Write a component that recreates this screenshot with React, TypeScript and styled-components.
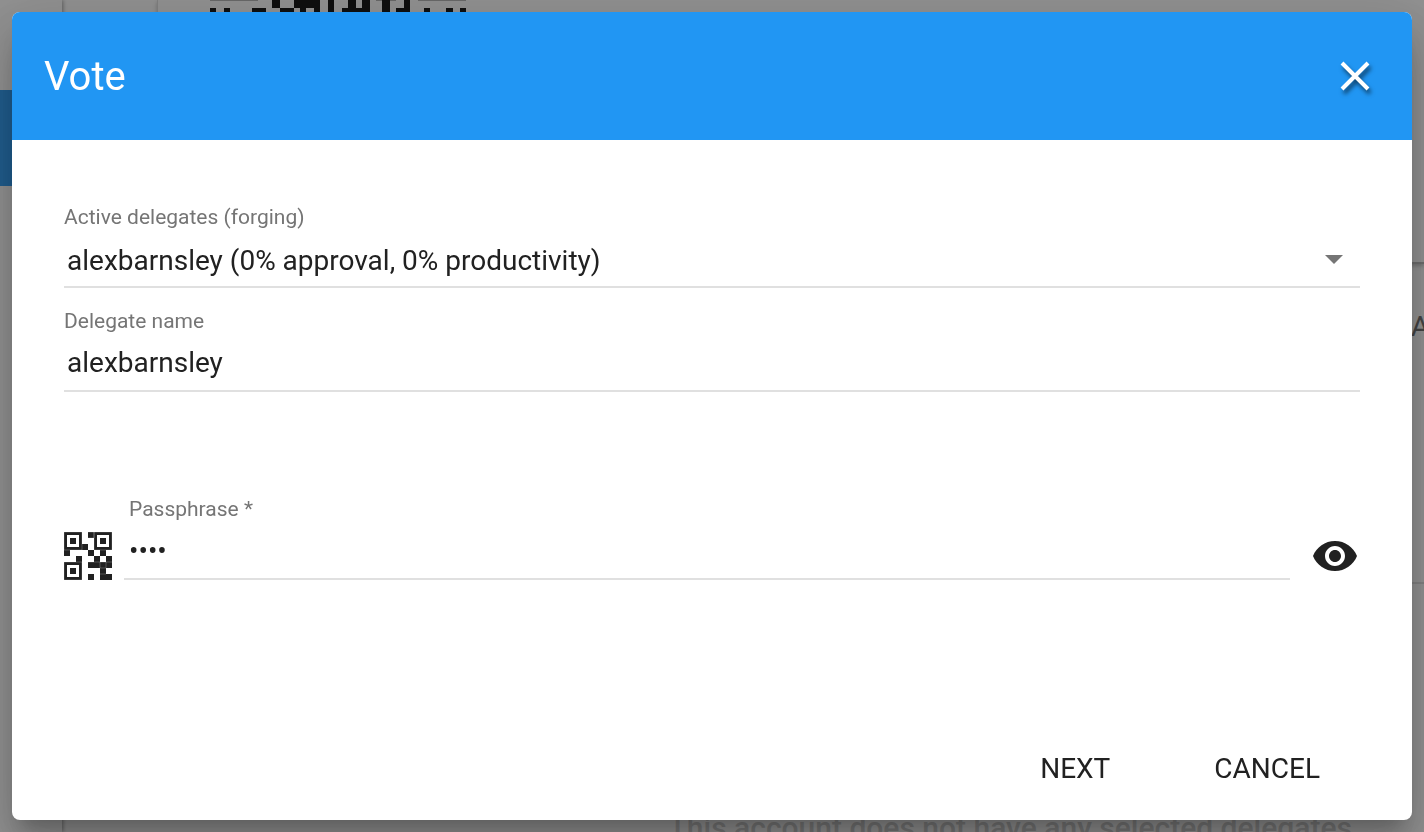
import React, { useState } from 'react';
import styled, { createGlobalStyle } from 'styled-components';

const GlobalStyle = createGlobalStyle`
  * { box-sizing: border-box; }
  body {
    margin: 0;
    font-family: Roboto, "Liberation Sans", sans-serif;
    color: #212121;
    background: #fafafa;
  }
  button, input, select { font-family: inherit; color: inherit; }
`;

const Page = styled.div`
  display: flex;
  height: 100vh;
  overflow: hidden;
`;

const Sidebar = styled.nav`
  flex: 0 0 62px;
  padding-top: 90px;
  box-shadow: 1px 0 4px rgba(0, 0, 0, 0.4);
`;

const ActiveItem = styled.div`
  height: 96px;
  background: #2196f3;
`;

const Content = styled.main`
  flex: 1;
  min-width: 0;
  display: flex;
  flex-direction: column;
`;

const Account = styled.section`
  flex: 0 0 264px;
  margin-left: 95px;
  border-left: 1px solid #d8d8d8;
  border-bottom: 2px solid #b4b4b4;
  box-shadow: 0 2px 4px rgba(0, 0, 0, 0.25);
`;

const AddressCode = styled.svg`
  display: block;
  width: 256px;
  height: 12px;
  margin-left: 52px;
`;

const ColumnRow = styled.div`
  flex: 0 0 320px;
  display: flex;
  justify-content: flex-end;
  padding-top: 45px;
  border-bottom: 2px solid #dcdcdc;
  font-size: 28px;
  line-height: 36px;
  color: #666;
`;

const ColumnName = styled.span`
  flex: 0 0 13px;
  min-width: 0;
  white-space: nowrap;
`;

const EmptyNotice = styled.p`
  flex: none;
  margin: 224px 72px 0;
  text-align: right;
  font-size: 30px;
  line-height: 40px;
  font-weight: 500;
  color: #c8c8c8;
`;

const Backdrop = styled.div`
  position: fixed;
  inset: 0;
  display: flex;
  padding: 12px;
  background: rgba(33, 33, 33, 0.48);
`;

const Dialog = styled.form`
  flex: 1;
  min-width: 0;
  display: flex;
  flex-direction: column;
  overflow: hidden;
  border-radius: 8px;
  background: #fff;
  box-shadow: 0 16px 18px -10px rgba(0, 0, 0, 0.2),
    0 30px 44px 4px rgba(0, 0, 0, 0.14), 0 12px 56px 10px rgba(0, 0, 0, 0.12);
`;

const Header = styled.header`
  flex: 0 0 128px;
  display: flex;
  align-items: center;
  justify-content: space-between;
  padding: 0 33px 0 32px;
  background: #2196f3;
  color: #fff;
`;

const Title = styled.h2`
  margin: 0;
  padding-top: 2px;
  font-size: 40px;
  font-weight: 400;
  line-height: 48px;
`;

const IconButton = styled.button`
  flex: none;
  display: grid;
  place-items: center;
  width: 48px;
  height: 48px;
  padding: 0;
  border: 0;
  background: none;
  cursor: pointer;

  svg { display: block; overflow: visible; }
`;

const CloseButton = styled(IconButton)`
  color: #fff;
  svg { filter: drop-shadow(2px 4px 2px rgba(0, 0, 0, 0.55)); }
`;

const Body = styled.div`
  flex: 1;
  padding: 60px 52px 0;
`;

const Field = styled.div`
  flex: 1;
  min-width: 0;
  display: flex;
  flex-direction: column;
`;

const Label = styled.label<{ $inset?: boolean }>`
  padding: ${p => (p.$inset ? '2px 5px 0' : '2px 0 0')};
  font-size: 21px;
  line-height: 30px;
  color: #757575;
`;

const TextInput = styled.input<{ $secret?: boolean }>`
  width: 100%;
  height: 56px;
  padding: ${p => (p.$secret ? '0 5px 2px' : '0 3px 2px')};
  border: 0;
  border-bottom: 2px solid #e0e0e0;
  border-radius: 0;
  outline: 0;
  background: none;
  font-size: 28px;
`;

const SelectBox = styled.div`
  display: grid;
  align-items: center;
  margin-bottom: 16px;
  border-bottom: 2px solid #e0e0e0;

  > * { grid-area: 1 / 1; }
  svg { justify-self: end; margin: 2px 16px 0 0; pointer-events: none; }
`;

const Select = styled.select`
  width: 100%;
  height: 54px;
  padding: 2px 48px 0 3px;
  border: 0;
  outline: 0;
  appearance: none;
  background: none;
  font-size: 28px;
`;

const PassphraseRow = styled.div`
  display: flex;
  align-items: flex-end;
  gap: 12px;
  margin-top: 100px;

  > :last-child { margin: 0 1px 0 9px; }
`;

const Footer = styled.footer`
  display: flex;
  justify-content: flex-end;
  gap: 72px;
  padding: 0 76px 15px;
`;

const ActionButton = styled.button`
  height: 72px;
  padding: 0 16px;
  border: 0;
  background: none;
  font-size: 28px;
  line-height: 72px;
  text-transform: uppercase;
  cursor: pointer;
`;

const codeCells = [
  [62, 0, 8], [84, 0, 26], [118, 0, 6], [138, 0, 8], [152, 0, 8], [172, 0, 8], [194, 0, 6],
  [0, 8, 6], [14, 8, 6], [42, 8, 14], [70, 8, 14], [90, 8, 6], [104, 8, 6], [118, 8, 6],
  [132, 8, 28], [172, 8, 8], [186, 8, 14], [214, 8, 6], [236, 8, 7], [250, 8, 6],
];

const delegates = ['alexbarnsley (0% approval, 0% productivity)'];

function QrIcon() {
  return (
    <svg width="48" height="48" viewBox="0 0 16 16" fill="#212121" fillRule="evenodd" aria-hidden="true">
      <path d="M0 0h6v6H0zM1 1v4h4V1zM2 2h2v2H2zM10 0h6v6h-6zM11 1v4h4V1zM12 2h2v2h-2zM0 10h6v6H0zM1 11v4h4v-4zM2 12h2v2H2z" />
      <path d="M8 0h2v2H8zM6 4h2v2H6zM0 6h2v2H0zM8 6h2v2H8zM12 6h2v2h-2zM4 8h2v2H4zM10 8h2v2h-2zM14 8h2v2h-2zM8 10h8v2H8zM12 12h2v2h-2zM8 14h2v2H8zM12 14h4v2h-4z" />
      <path
        d="M0 0h6v6H0zM10 0h6v6h-6zM0 10h6v6H0zM8 10h8M12 10v2M14 10v2M12 12h2M12 14h2M8 0h2v2H8"
        fill="none"
        stroke="#fff"
        strokeOpacity="0.25"
        strokeWidth="0.3"
      />
    </svg>
  );
}

export default function App() {
  const [name, setName] = useState('alexbarnsley');
  const [passphrase, setPassphrase] = useState('abcd');
  const [visible, setVisible] = useState(false);

  return (
    <>
      <GlobalStyle />
      <Page aria-hidden="true">
        <Sidebar><ActiveItem /></Sidebar>
        <Content>
          <Account>
            <AddressCode viewBox="0 0 256 12">
              <path d="M0 0h48v1H0zM166 0h20v1h-20zM208 0h48v1h-48z" fill="#aaa" />
              {codeCells.map(([x, y, w]) => (
                <rect key={`${x}-${y}`} x={x} y={y} width={w} height="8" fill="#000" />
              ))}
            </AddressCode>
          </Account>
          <ColumnRow><ColumnName>Approval</ColumnName></ColumnRow>
          <EmptyNotice>This account does not have any selected delegates</EmptyNotice>
        </Content>
      </Page>
      <Backdrop>
        <Dialog role="dialog" aria-labelledby="vote-title" onSubmit={e => e.preventDefault()}>
          <Header>
            <Title id="vote-title">Vote</Title>
            <CloseButton type="button" aria-label="Close">
              <svg width="28" height="28" viewBox="0 0 28 28" fill="none" stroke="currentColor" strokeWidth="4">
                <path d="M1 1l26 26M27 1L1 27" />
              </svg>
            </CloseButton>
          </Header>
          <Body>
            <Field>
              <Label htmlFor="delegate">Active delegates (forging)</Label>
              <SelectBox>
                <Select id="delegate">
                  {delegates.map(d => <option key={d}>{d}</option>)}
                </Select>
                <svg width="20" height="10" viewBox="0 0 20 10" fill="#757575" aria-hidden="true">
                  <path d="M1 0h18l-9 9z" />
                </svg>
              </SelectBox>
            </Field>
            <Field>
              <Label htmlFor="delegate-name">Delegate name</Label>
              <TextInput id="delegate-name" value={name} onChange={e => setName(e.target.value)} />
            </Field>
            <PassphraseRow>
              <IconButton type="button" aria-label="Scan QR code"><QrIcon /></IconButton>
              <Field>
                <Label $inset htmlFor="passphrase">Passphrase *</Label>
                <TextInput
                  $secret
                  id="passphrase"
                  type={visible ? 'text' : 'password'}
                  value={passphrase}
                  onChange={e => setPassphrase(e.target.value)}
                />
              </Field>
              <IconButton type="button" aria-label="Show passphrase" onClick={() => setVisible(!visible)}>
                <svg width="48" height="48" viewBox="0 0 24 24" fill="currentColor" aria-hidden="true">
                  <path d="M12 4.5C7 4.5 2.73 7.61 1 12c1.73 4.39 6 7.5 11 7.5s9.27-3.11 11-7.5c-1.73-4.39-6-7.5-11-7.5zM12 17c-2.76 0-5-2.24-5-5s2.24-5 5-5 5 2.24 5 5-2.24 5-5 5zm0-8c-1.66 0-3 1.34-3 3s1.34 3 3 3 3-1.34 3-3-1.34-3-3-3z" />
                </svg>
              </IconButton>
            </PassphraseRow>
          </Body>
          <Footer>
            <ActionButton type="submit">Next</ActionButton>
            <ActionButton type="button">Cancel</ActionButton>
          </Footer>
        </Dialog>
      </Backdrop>
    </>
  );
}
